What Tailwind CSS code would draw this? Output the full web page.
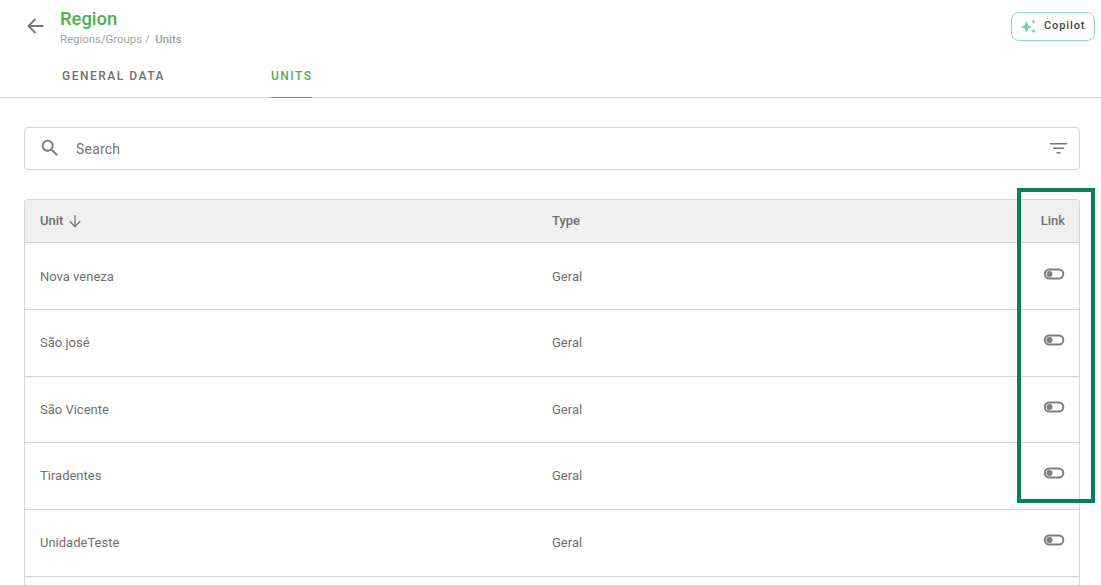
<!DOCTYPE html>
<html lang="en">
<head>
  <meta charset="UTF-8">
  <title>Region - Units</title>
  <script src="https://cdn.jsdelivr.net/npm/@tailwindcss/browser@4"></script>
</head>
<body class="bg-white font-['Roboto',sans-serif] text-[#707070] h-[585px] w-[1101px] overflow-hidden relative">
  <!-- header -->
  <div class="flex items-start h-[55px]">
    <button class="ml-[26px] mt-[17px] text-[#757575]">
      <svg width="19" height="18" viewBox="0 0 19 18" fill="none" stroke="currentColor" stroke-width="1.8"><path d="M17.5 9H2.5M9.5 2 2.5 9l7 7"/></svg>
    </button>
    <div class="ml-[15px] mt-[8px]">
      <h1 class="text-[18.4px] leading-[22px] font-medium text-[#4caf50]">Region</h1>
      <p class="text-[11.4px] leading-[14px] mt-[2px] text-[#a3a3a3]">Regions/Groups /&nbsp; <span class="font-medium text-[#9e9e9e]">Units</span></p>
    </div>
    <button class="ml-auto mr-[6px] mt-[12px] w-[84px] h-[29px] rounded-[8px] border border-[#90cfe8] flex items-center pl-[9px] gap-[7px]">
      <svg width="16" height="16" viewBox="0 0 16 16" fill="#6fd3b0"><path d="M5.500 2 7.300 6.200 11 8 7.300 9.800 5.500 14 3.700 9.800 0 8 3.700 6.200zM12.500 0l.8 1.700 1.700.8-1.700.8-.8 1.700-.8-1.700-1.700-.8 1.700-.8zM12.500 9.500l.8 1.700 1.700.8-1.700.8-.8 1.700-.8-1.700-1.700-.8 1.700-.8z"/></svg>
      <span class="text-[11px] font-medium tracking-[0.9px] text-[#444]">Copilot</span>
    </button>
  </div>

  <!-- tabs -->
  <div class="flex h-[43px] border-b border-[#d6d6d6] pl-[62px]">
    <div class="text-[12px] font-medium tracking-[1.5px] leading-[42px] w-[209px]">GENERAL DATA</div>
    <div class="text-[12px] font-medium tracking-[1.5px] leading-[42px] text-[#4caf50] border-b border-[#4caf50] h-[43px] w-[41px]">UNITS</div>
  </div>

  <div class="px-[24px] pr-[21px]">
    <!-- search -->
    <div class="mt-[29px] h-[43px] border border-[#d6d6d6] rounded-[4px] flex items-center pl-[14px] pr-[12px]">
      <svg class="mb-[2px]" width="22" height="22" viewBox="0 0 24 24" fill="#757575"><path d="M15.500 14h-.79l-.28-.27A6.470 6.470 0 0 0 16 9.500 6.500 6.500 0 1 0 9.500 16c1.610 0 3.090-.59 4.230-1.570l.27.28v.79l5 4.990L20.490 19zm-6 0C7.010 14 5 11.990 5 9.500S7.010 5 9.500 5 14 7.010 14 9.500 11.990 14 9.500 14"/></svg>
      <span class="ml-[15px] pt-[2px] text-[14px] text-[#757575] tracking-[0.2px]">Search</span>
      <svg class="ml-auto" width="17" height="11" viewBox="0 0 17 11" fill="#757575"><path d="M0 0h17v1.500H0zM3 4.500h11V6H3zM6.500 9h4v1.500h-4z"/></svg>
    </div>

    <!-- table -->
    <div class="mt-[29px] border border-[#d6d6d6] border-b-0 rounded-t-[4px] text-[13px]">
      <div class="flex items-center h-[43px] bg-[#f0f0f0] border-b border-[#d6d6d6] font-medium rounded-t-[4px]">
        <div class="w-[527px] pl-[15px] flex items-center gap-[5px]">Unit
          <svg width="14" height="14" viewBox="0 0 14 14" fill="none" stroke="#757575" stroke-width="1.300"><path d="M7 1v11.500M1.800 7.300 7 12.500l5.200-5.200"/></svg>
        </div>
        <div>Type</div>
        <div class="ml-auto pr-[14px]">Link</div>
      </div>
      <div class="flex items-center h-[67px] border-b border-[#d6d6d6]">
        <div class="w-[527px] pl-[15px] pt-[2px]">Nova veneza</div><div class="pt-[2px]">Geral</div>
        <svg class="ml-auto mr-[14px] mb-[4px]" width="22" height="12" viewBox="0 0 22 12" fill="none"><rect x="1.800" y="1.500" width="18.500" height="9" rx="4.500" stroke="#808080" stroke-width="2"/><circle cx="6.500" cy="6" r="3" fill="#808080"/></svg>
      </div>
      <div class="flex items-center h-[67px] border-b border-[#d6d6d6]">
        <div class="w-[527px] pl-[15px]">São josé</div><div>Geral</div>
        <svg class="ml-auto mr-[14px] mb-[6px]" width="22" height="12" viewBox="0 0 22 12" fill="none"><rect x="1.800" y="1.500" width="18.500" height="9" rx="4.500" stroke="#808080" stroke-width="2"/><circle cx="6.500" cy="6" r="3" fill="#808080"/></svg>
      </div>
      <div class="flex items-center h-[66px] border-b border-[#d6d6d6]">
        <div class="w-[527px] pl-[15px]">São Vicente</div><div>Geral</div>
        <svg class="ml-auto mr-[14px] mb-[5px]" width="22" height="12" viewBox="0 0 22 12" fill="none"><rect x="1.800" y="1.500" width="18.500" height="9" rx="4.500" stroke="#808080" stroke-width="2"/><circle cx="6.500" cy="6" r="3" fill="#808080"/></svg>
      </div>
      <div class="flex items-center h-[67px] border-b border-[#d6d6d6]">
        <div class="w-[527px] pl-[15px]">Tiradentes</div><div>Geral</div>
        <svg class="ml-auto mr-[14px] mb-[6px]" width="22" height="12" viewBox="0 0 22 12" fill="none"><rect x="1.800" y="1.500" width="18.500" height="9" rx="4.500" stroke="#808080" stroke-width="2"/><circle cx="6.500" cy="6" r="3" fill="#808080"/></svg>
      </div>
      <div class="flex items-center h-[67px] border-b border-[#d6d6d6]">
        <div class="w-[527px] pl-[15px]">UnidadeTeste</div><div>Geral</div>
        <svg class="ml-auto mr-[14px] mb-[6px]" width="22" height="12" viewBox="0 0 22 12" fill="none"><rect x="1.800" y="1.500" width="18.500" height="9" rx="4.500" stroke="#808080" stroke-width="2"/><circle cx="6.500" cy="6" r="3" fill="#808080"/></svg>
      </div>
      <div class="h-[20px]"></div>
    </div>
  </div>

  <!-- highlight box drawn over the Link column -->
  <div class="absolute left-[1017px] top-[188px] w-[78px] h-[315px] border-[4px] border-[#068159]"></div>
</body>
</html>
